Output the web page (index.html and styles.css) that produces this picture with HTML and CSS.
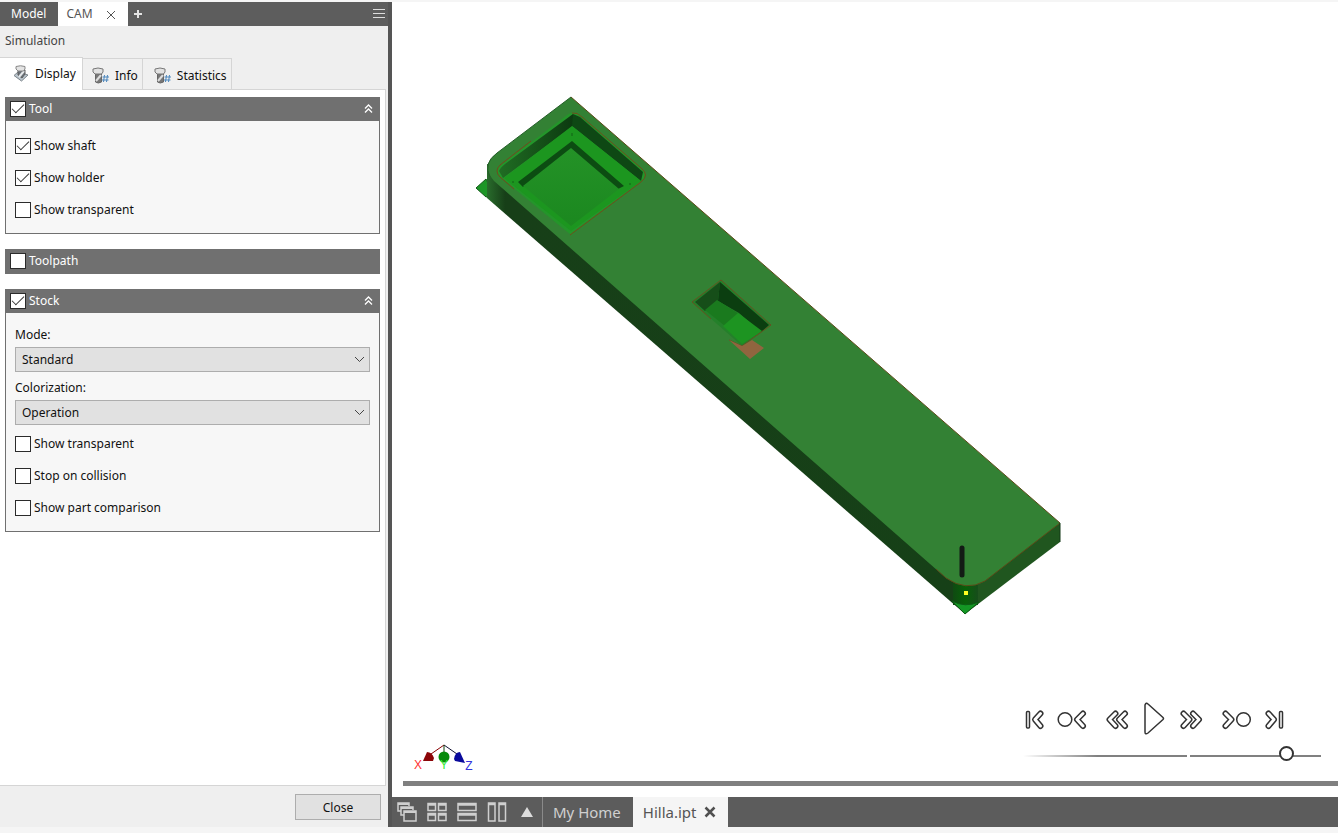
FILE: index.html
```html
<!DOCTYPE html>
<html lang="en">
<head>
<meta charset="utf-8">
<title>Hilla.ipt - Simulation</title>
<link rel="stylesheet" href="styles.css">
</head>
<body>
<div class="app">
  <aside class="browser">
    <nav class="dock-tabs" aria-label="Browser panels">
      <button class="dock-tab" type="button">Model</button>
      <div class="dock-tab dock-tab-active">
        <span>CAM</span>
        <button class="icon-button" type="button" aria-label="Close CAM">
          <svg width="10" height="10" viewBox="0 0 10 10"><path d="M1 2 9 10M9 2 1 10" stroke="#555" fill="none"/></svg>
        </button>
      </div>
      <button class="icon-button dock-add" type="button" aria-label="Add panel">
        <svg width="10" height="10" viewBox="0 0 10 10"><path d="M5 1V9M1 5H9" stroke="#e4e4e4" stroke-width="2" fill="none"/></svg>
      </button>
      <button class="icon-button dock-menu" type="button" aria-label="Menu">
        <svg width="12" height="10" viewBox="0 0 12 10"><path d="M0 .5H12M0 4.500H12M0 8.500H12" stroke="#ddd" fill="none"/></svg>
      </button>
    </nav>

    <h1 class="panel-title">Simulation</h1>

    <div class="page-tabs" role="tablist">
      <button class="page-tab page-tab-active" type="button" role="tab" aria-selected="true">
        <svg width="17" height="18" viewBox="0 0 17 18">
          <path d="M1 10.500 5 7 15 10 8.500 16Z" fill="#b9c4cc" stroke="#7d858b"/>
          <path d="M5 5V10L9 13 12 9V5Z" fill="#687078" stroke="#5c5c5c"/>
          <path d="M6 12 11 6" stroke="#e6e9eb" stroke-width="2"/>
          <path d="M3 1.500Q7.500 0 12 1.500V4L10.500 6H5L3 4Z" fill="#e4e4e4" stroke="#888"/>
        </svg>
        <span>Display</span>
      </button>
      <button class="page-tab" type="button" role="tab" aria-selected="false">
        <svg width="17" height="18" viewBox="0 0 17 18">
          <path d="M3.500 6V15Q6 17 9.500 15V6Z" fill="#777" stroke="#666"/>
          <path d="M4 14 9 8" stroke="#ddd" stroke-width="2"/>
          <path d="M1 2Q6 0 11 2V5L9.500 7H3L1 5Z" fill="#e2e2e2" stroke="#777"/>
          <path d="M12.500 8 11.500 15M15.500 8 14.500 15M10.500 10H17M10 13H16.500" stroke="#4d87bd" fill="none"/>
        </svg>
        <span>Info</span>
      </button>
      <button class="page-tab" type="button" role="tab" aria-selected="false">
        <svg width="17" height="18" viewBox="0 0 17 18">
          <path d="M3.500 6V15Q6 17 9.500 15V6Z" fill="#777" stroke="#666"/>
          <path d="M4 14 9 8" stroke="#ddd" stroke-width="2"/>
          <path d="M1 2Q6 0 11 2V5L9.500 7H3L1 5Z" fill="#e2e2e2" stroke="#777"/>
          <path d="M12.500 8 11.500 15M15.500 8 14.500 15M10.500 10H17M10 13H16.500" stroke="#4d87bd" fill="none"/>
        </svg>
        <span>Statistics</span>
      </button>
    </div>

    <div class="page">
      <section class="group">
        <header class="group-head">
          <label class="check"><input type="checkbox" checked><span>Tool</span></label>
          <button class="icon-button" type="button" aria-label="Collapse Tool">
            <svg width="9" height="11" viewBox="0 0 9 11"><path d="M1 4.500 4.500 1 8 4.500M1 8.500 4.500 5 8 8.500" stroke="#fff" stroke-width="1.300" fill="none"/></svg>
          </button>
        </header>
        <div class="group-body tool-body">
          <label class="check"><input type="checkbox" checked><span>Show shaft</span></label>
          <label class="check"><input type="checkbox" checked><span>Show holder</span></label>
          <label class="check"><input type="checkbox"><span>Show transparent</span></label>
        </div>
      </section>

      <section class="group">
        <header class="group-head group-head-closed">
          <label class="check"><input type="checkbox"><span>Toolpath</span></label>
        </header>
      </section>

      <section class="group">
        <header class="group-head">
          <label class="check"><input type="checkbox" checked><span>Stock</span></label>
          <button class="icon-button" type="button" aria-label="Collapse Stock">
            <svg width="9" height="11" viewBox="0 0 9 11"><path d="M1 4.500 4.500 1 8 4.500M1 8.500 4.500 5 8 8.500" stroke="#fff" stroke-width="1.300" fill="none"/></svg>
          </button>
        </header>
        <div class="group-body stock-body">
          <div class="field">
            <label for="mode">Mode:</label>
            <div class="select-wrap">
              <select id="mode"><option>Standard</option></select>
              <svg class="select-arrow" width="11" height="7" viewBox="0 0 11 7"><path d="M1 1 5.500 5.500 10 1" stroke="#444" fill="none"/></svg>
            </div>
          </div>
          <div class="field">
            <label for="colorization">Colorization:</label>
            <div class="select-wrap">
              <select id="colorization"><option>Operation</option></select>
              <svg class="select-arrow" width="11" height="7" viewBox="0 0 11 7"><path d="M1 1 5.500 5.500 10 1" stroke="#444" fill="none"/></svg>
            </div>
          </div>
          <div class="stock-checks">
            <label class="check"><input type="checkbox"><span>Show transparent</span></label>
            <label class="check"><input type="checkbox"><span>Stop on collision</span></label>
            <label class="check"><input type="checkbox"><span>Show part comparison</span></label>
          </div>
        </div>
      </section>
    </div>

    <footer class="panel-foot"><button class="close-button" type="button">Close</button></footer>
  </aside>

  <main class="workspace">
    <div class="viewport">
      <svg class="scene" viewBox="392 2 946 779" role="img" aria-label="Machined part">
        <defs>
          <linearGradient id="corner" x1="0" x2="1"><stop offset="0" stop-color="#0f4a12"/><stop offset=".5" stop-color="#086008"/><stop offset="1" stop-color="#174d1b"/></linearGradient>
          <linearGradient id="floor" x1="0" y1="0" x2="0" y2="1"><stop offset="0" stop-color="#249227"/><stop offset="1" stop-color="#1b881f"/></linearGradient>
          <linearGradient id="wall" x1="0" y1="0" x2="1" y2="0"><stop offset="0" stop-color="#206d23"/><stop offset="1" stop-color="#0c3a10"/></linearGradient>
          <linearGradient id="side" gradientUnits="userSpaceOnUse" x1="486" y1="0" x2="965" y2="0"><stop offset="0" stop-color="#2a6e2d"/><stop offset=".04" stop-color="#173f18"/><stop offset="1" stop-color="#164017"/></linearGradient>
        </defs>
        <path d="M476 188 486 179 494 195 486 197Z" fill="#1d9627" stroke="#125a18"/>
        <path d="M487 164V198L965 614 970 560 600 180Z" fill="url(#side)"/>
        <path d="M966 580 1060 523V542L965 614Z" fill="#20561f"/>
        <path d="M953 580H978V605H953Z" fill="url(#corner)"/>
        <path d="M952 601Q965 608 979 602L965 614Z" fill="#149724" stroke="#0d5c14"/>
        <path d="M571 97 1060 523 985 581Q966 592 946 578L494 181Q480 165 497 153Z" fill="#338134"/>
        <path d="M571 97 1060 523 985 581Q966 592 946 578L936 569" fill="none" stroke="#5c4a18"/>
        <path d="M571 97 497 153Q483 163 490 177" fill="none" stroke="#245d28"/>
        <path d="M1060 523V542" stroke="#123917"/>
        <!-- square pocket -->
        <path d="M567 115Q573 110 580 115L641 168Q649 175 641 182L571 235 500 177Q494 171 501 165Z" fill="#24952a"/>
        <path d="M573 114V126L503 178 499 171Q500 168 505 164Z" fill="url(#wall)"/>
        <path d="M573 114 580 117 643 172 641 181 572 126Z" fill="#0e4814"/>
        <path d="M572 126 504 178 571 231 641 181Z" fill="#1c961f"/>
        <path d="M572 141 518 182 523 187 571 149 618 189 624 186Z" fill="#0c4c12"/>
        <path d="M571 148 523 186 571 226 619 189Z" fill="url(#floor)"/>
        <path d="M531 141 500 165Q494 171 500 177L514 189M572 113Q577 112 582 117L641 168Q650 175 641 182L570 235" fill="none" stroke="#704c1c"/>
        <path d="M572 133V136M513 181V183M630 183V185" stroke="#126017"/>
        <!-- rectangular pocket -->
        <path d="M721 280 771 325 742 346 692 302Z" fill="#24802a"/>
        <path d="M720 282 695 302 705 311 718 301Z" fill="#164e19"/>
        <path d="M720 282 769 325 761 332 739 313 718 301Z" fill="#0b3e10"/>
        <path d="M717 300 705 310 725 326 739 314Z" fill="#1a7a1e"/>
        <path d="M738 313 723 326 742 344 762 331Z" fill="#1d9421"/>
        <path d="M711 319 692 302 721 280 771 325 742 346 729 340" fill="none" stroke="#665120"/>
        <path d="M729 340 742 346 752 340 764 348 750 359Z" fill="#91653f"/>
        <!-- cutter and contact point -->
        <path d="M962 548V575" stroke="#131b15" stroke-width="5" stroke-linecap="round"/>
        <path d="M964 591H968V595H964Z" fill="#ffff22"/>
      </svg>

      <svg class="triad" width="66" height="34" viewBox="412 740 66 34" role="img" aria-label="Axes">
        <path d="M444 745 431 754" stroke="#800"/><path d="M444 745 457 754" stroke="#113"/>
        <path d="M444 745V754" stroke="#141"/>
        <path d="M423 761 427 752Q432 752 434 758L433 761Z" fill="#8c0508"/>
        <path d="M454 759Q455 752 460 752L465 763 455 761Z" fill="#0a0a9c"/>
        <circle cx="444" cy="757" r="5.500" fill="#068a0a"/>
        <text class="axis" x="418" y="769" fill="#f33">X</text>
        <text class="axis" x="444" y="769" fill="#3e3">Y</text>
        <text class="axis" x="469" y="770" fill="#33d">Z</text>
      </svg>

      <div class="player">
        <div class="player-buttons">
          <div class="player-pair">
            <button class="icon-button" type="button" aria-label="Go to start">
              <svg width="22" height="34" viewBox="0 0 22 34"><rect class="ink" x="2.500" y="9.500" width="3" height="16.500" rx="1"/><path class="outer" d="M16.500 11.500 11 17.500 16.500 24"/><path class="inner" d="M16.500 11.500 11 17.500 16.500 24"/></svg>
            </button>
            <button class="icon-button" type="button" aria-label="Previous operation">
              <svg width="32" height="34" viewBox="0 0 32 34"><circle class="ink" cx="9" cy="17.500" r="6.800"/><path class="outer" d="M27 11.500 21 17.500 27 24"/><path class="inner" d="M27 11.500 21 17.500 27 24"/></svg>
            </button>
          </div>
          <div class="player-center">
            <button class="icon-button" type="button" aria-label="Rewind">
              <svg width="26" height="34" viewBox="0 0 26 34"><path class="outer" d="M11.500 11.500 5.500 17.500 11.500 24"/><path class="inner" d="M11.500 11.500 5.500 17.500 11.500 24"/><path class="outer" d="M21 11.500 15 17.500 21 24"/><path class="inner" d="M21 11.500 15 17.500 21 24"/></svg>
            </button>
            <button class="icon-button" type="button" aria-label="Play">
              <svg width="24" height="34" viewBox="0 0 24 34"><path class="ink" d="M3 3Q4 0 6 2L21 15.500Q22 16.500 21 17.500L6 31Q3 33 3 30Z"/></svg>
            </button>
            <button class="icon-button" type="button" aria-label="Fast forward">
              <svg width="26" height="34" viewBox="0 0 26 34"><path class="outer" d="M5.500 11.500 11.500 17.500 5.500 24"/><path class="inner" d="M5.500 11.500 11.500 17.500 5.500 24"/><path class="outer" d="M15 11.500 21 17.500 15 24"/><path class="inner" d="M15 11.500 21 17.500 15 24"/></svg>
            </button>
          </div>
          <div class="player-pair">
            <button class="icon-button" type="button" aria-label="Next operation">
              <svg width="32" height="34" viewBox="0 0 32 34"><path class="outer" d="M5.500 11.500 11.500 17.500 5.500 24"/><path class="inner" d="M5.500 11.500 11.500 17.500 5.500 24"/><circle class="ink" cx="23.500" cy="17.500" r="6.800"/></svg>
            </button>
            <button class="icon-button" type="button" aria-label="Go to end">
              <svg width="22" height="34" viewBox="0 0 22 34"><path class="outer" d="M6.500 11.500 12 17.500 6.500 24"/><path class="inner" d="M6.500 11.500 12 17.500 6.500 24"/><rect class="ink" x="17.500" y="9.500" width="3" height="16.500" rx="1"/></svg>
            </button>
          </div>
        </div>
        <input class="speed" type="range" min="0" max="100" value="90.500" step="any" aria-label="Simulation speed">
      </div>
    </div>

    <div class="progress"></div>

    <nav class="doc-tabs" aria-label="Documents">
      <div class="arrange">
        <button class="icon-button" type="button" aria-label="Cascade"><svg width="20" height="20" viewBox="0 0 20 20"><g fill="#5c5c5c" stroke="#cfcfcf" stroke-width="1.500"><path d="M4 9H1V1H12V4"/><path d="M7 13H4V5H16V8"/><path d="M7 9H19V19H7Z"/></g><path d="M1 2H12M4 6H16M7 10H19" stroke="#cfcfcf" stroke-width="2"/></svg></button>
        <button class="icon-button" type="button" aria-label="Tile"><svg width="20" height="20" viewBox="0 0 20 20"><path d="M1 1.500H8.500V8.500H1ZM11.500 1.500H19V8.500H11.500ZM1 11.500H8.500V18.500H1ZM11.500 11.500H19V18.500H11.500ZM1 3H8.500M11.500 3H19M1 13H8.500M11.500 13H19" stroke="#cfcfcf" stroke-width="1.500" fill="none"/></svg></button>
        <button class="icon-button" type="button" aria-label="Tile horizontally"><svg width="20" height="20" viewBox="0 0 20 20"><path d="M1 1.500H19V8.500H1ZM1 11.500H19V18.500H1ZM1 3H19M1 13H19" stroke="#cfcfcf" stroke-width="1.500" fill="none"/></svg></button>
        <button class="icon-button" type="button" aria-label="Tile vertically"><svg width="20" height="20" viewBox="0 0 20 20"><path d="M1.500 1H8V19H1.500ZM12 1H18.500V19H12ZM1 2.500H8M12 2.500H19" stroke="#cfcfcf" stroke-width="1.500" fill="none"/></svg></button>
        <button class="icon-button" type="button" aria-label="More windows"><svg width="20" height="20" viewBox="0 0 20 20"><path d="M10 5 16 15H4Z" fill="#dcdcdc"/></svg></button>
      </div>
      <button class="doc-tab" type="button">My Home</button>
      <div class="doc-tab doc-tab-active">
        <span>Hilla.ipt</span>
        <button class="icon-button" type="button" aria-label="Close Hilla.ipt"><svg width="12" height="12" viewBox="0 0 12 12"><path d="M1.500 1.500 10.500 10.500M10.500 1.500 1.500 10.500" stroke="#505050" stroke-width="2.500" fill="none"/></svg></button>
      </div>
    </nav>
  </main>
</div>
</body>
</html>
```

FILE: styles.css
```css
* { box-sizing: border-box; }

body {
  margin: 0;
  background: #f5f5f5;
  color: #111;
  font: 12px/16px "Noto Sans", "Open Sans", sans-serif;
}

button, select, input { font: inherit; color: inherit; margin: 0; }
svg { display: block; }

.icon-button {
  display: flex;
  padding: 0;
  border: 0;
  background: none;
}

.app {
  display: flex;
  height: 100vh;
  padding: 2px 0 6px;
}

/* Left panel */
.browser {
  display: flex;
  flex-direction: column;
  flex: 0 0 392px;
  border-right: 4px solid #555;
  background: #efefef;
}

.dock-tabs {
  display: flex;
  align-items: center;
  height: 24px;
  background: #5d5d5d;
}

.dock-tab {
  display: flex;
  align-items: center;
  height: 24px;
  padding: 0 12px 0 11px;
  border: 0;
  background: none;
  color: #fff;
}

.dock-tab-active {
  gap: 13px;
  padding: 0 12px 0 8px;
  background: #fff;
  color: #555;
}

.dock-add { margin-left: 5px; }
.dock-menu { margin: 0 3px 0 auto; }

.panel-title {
  margin: 0;
  padding: 7px 5px 8px;
  color: #444;
  font-size: 12px;
  font-weight: 400;
}

.page-tabs {
  display: flex;
  align-items: flex-end;
  height: 33px;
  margin-right: 2px;
  border-bottom: 1px solid #d5d5d5;
}

.page-tab {
  display: flex;
  align-items: center;
  gap: 6px;
  height: 31px;
  padding: 3px 4px 0 9px;
  border: solid #d5d5d5;
  border-width: 1px 1px 0 0;
  background: #f0f0f0;
}

.page-tab + .page-tab + .page-tab { padding-left: 11px; }

.page-tab-active {
  gap: 5px;
  height: 33px;
  margin-bottom: -1px;
  padding: 0 6px 1px 13px;
  background: #fff;
}

.page {
  display: flex;
  flex: 1;
  flex-direction: column;
  gap: 15px;
  min-height: 0;
  margin-right: 2px;
  padding: 7px 5px;
  border: solid #d5d5d5;
  border-width: 0 1px 1px 0;
  background: #fff;
}

.group-head {
  display: flex;
  align-items: center;
  justify-content: space-between;
  height: 24px;
  padding: 0 7px 0 5px;
  background: #707070;
  color: #fff;
}

.group-head-closed {
  height: 25px;
  padding-bottom: 1px;
}

.group-body {
  border: 1px solid #707070;
  border-top: 0;
  background: #f7f7f7;
}

.check {
  display: flex;
  align-items: center;
  gap: 3px;
}

.check input {
  display: grid;
  place-items: center;
  width: 16px;
  height: 16px;
  border: 1px solid #2b2b2b;
  background: #fff;
  appearance: none;
}

.check input:checked::after {
  content: "";
  width: 11px;
  height: 5px;
  margin-bottom: 4px;
  border: solid #333;
  border-width: 0 0 1px 1px;
  transform: rotate(-45deg);
}

.tool-body {
  display: grid;
  gap: 16px;
  padding: 17px 9px 15px;
}

.stock-body {
  padding: 14px 9px 15px;
}

.field {
  display: grid;
  gap: 4px;
  margin-bottom: 8px;
}

.select-wrap { position: relative; }

.select-wrap select {
  display: block;
  width: 100%;
  height: 25px;
  padding: 0 24px 0 6px;
  border: 1px solid #adadad;
  border-radius: 0;
  background: #e1e1e1;
  appearance: none;
}

.select-arrow {
  position: absolute;
  top: 9px;
  right: 5px;
  pointer-events: none;
}

.stock-checks {
  display: grid;
  gap: 16px;
  padding-top: 3px;
}

.panel-foot {
  display: flex;
  justify-content: flex-end;
  padding: 8px 7px 7px;
}

.close-button {
  width: 86px;
  height: 26px;
  padding: 1px 0 0;
  border: 1px solid #adadad;
  background: #e1e1e1;
}

/* Model view */
.workspace {
  display: flex;
  flex: 1;
  flex-direction: column;
  min-width: 0;
  background: #fff;
}

.viewport {
  position: relative;
  flex: 1;
  min-height: 0;
}

.scene { width: 100%; height: 100%; }

.triad {
  position: absolute;
  bottom: 7px;
  left: 20px;
}

.axis {
  font: 12px "Liberation Sans", sans-serif;
  text-anchor: middle;
}

.player {
  position: absolute;
  right: 17px;
  bottom: 20px;
  display: grid;
  gap: 10px;
  width: 298px;
}

.player-buttons { display: flex; gap: 16px; padding-left: 1px; }
.player-pair { display: flex; gap: 10px; }
.player-center { display: flex; gap: 12px; }

.ink { fill: #fff; stroke: #333; stroke-width: 1.5px; }
.outer, .inner { fill: none; stroke-linecap: round; stroke-linejoin: round; }
.outer { stroke: #333; stroke-width: 6px; }
.inner { stroke: #fff; stroke-width: 3px; }

.speed {
  width: 100%;
  height: 15px;
  background:
    linear-gradient(#fff, #fff) 164px 9px / 3px 2px no-repeat,
    linear-gradient(90deg, #fff, #808080 25%) 0 9px / 100% 2px no-repeat;
  appearance: none;
}

.speed::-webkit-slider-thumb {
  width: 15px;
  height: 15px;
  border: 2px solid #333;
  border-radius: 50%;
  background: #fff;
  appearance: none;
}

.progress {
  height: 5px;
  margin: 0 0 11px 11px;
  background: #808080;
}

.doc-tabs {
  display: flex;
  height: 30px;
  background: #5c5c5c;
  font-size: 15px;
  line-height: 20px;
}

.arrange {
  display: flex;
  align-items: center;
  gap: 10px;
  padding: 0 5px;
  border-right: 1px solid #8a8a8a;
}

.doc-tab {
  display: flex;
  align-items: center;
  gap: 7px;
  padding: 0 12px 0 10px;
  border: 0;
  background: none;
  color: #d0d0d0;
}

.doc-tab-active {
  background: #f5f5f5;
  color: #555;
}
```
